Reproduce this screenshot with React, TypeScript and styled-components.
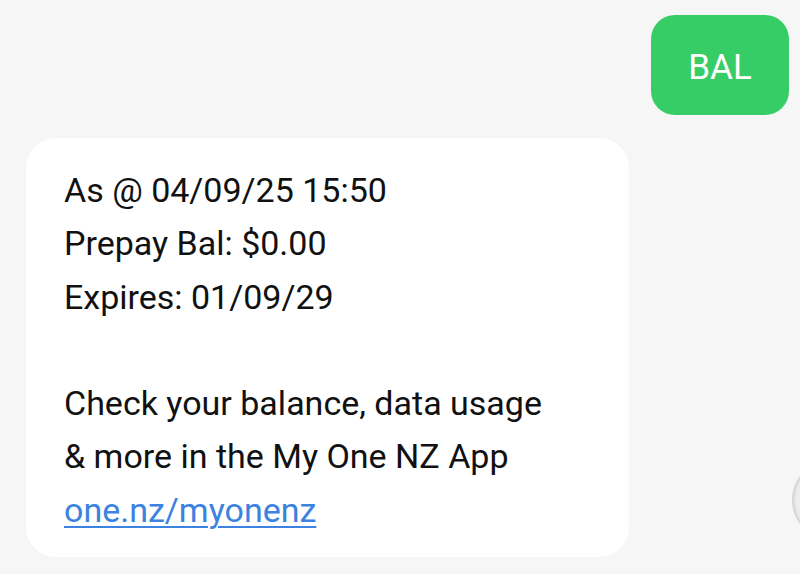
import styled, { createGlobalStyle } from "styled-components";

const GlobalStyle = createGlobalStyle`
    html, body {
        margin: 0;
        padding: 0;
        background: #f6f6f6;
        font-family: Roboto, "Noto Sans", "Liberation Sans", sans-serif;
    }
`

const Thread = styled.div`
    position: relative;
    width: 800px;
    height: 574px;
    overflow: hidden;
    display: flex;
    flex-direction: column;
    padding: 15px 11px 0 26px;
    box-sizing: border-box;
    gap: 23px;
`

const SentBubble = styled.div`
    align-self: flex-end;
    width: 138px;
    height: 100px;
    box-sizing: border-box;
    padding-top: 4px;
    border-radius: 24px;
    background: #36cd66;
    color: #fff;
    font-size: 35px;
    display: flex;
    align-items: center;
    justify-content: center;
`

const ReceivedBubble = styled.div`
    align-self: flex-start;
    width: 603px;
    height: 419px;
    box-sizing: border-box;
    padding: 26px 38px 0;
    border-radius: 30px;
    background: #fff;
    color: #111;
    font-size: 34px;
    line-height: 53.3px;
`

const Line = styled.div`
    height: 53.3px;
    white-space: nowrap;
`

const Link = styled.a`
    color: #3c82e0;
    text-decoration: underline;
    text-underline-offset: 4px;
    text-decoration-thickness: 2px;
`

const SideHandle = styled.div`
    position: absolute;
    left: 792px;
    top: 460px;
    width: 80px;
    height: 80px;
    border-radius: 50%;
    background: #ededed;
    box-shadow: inset 2px 0 3px rgba(0, 0, 0, 0.12);
`

const lines = [
    "As @ 04/09/25 15:50",
    "Prepay Bal: $0.00",
    "Expires: 01/09/29",
    "",
    "Check your balance, data usage",
    "& more in the My One NZ App",
]

export default function App() {
    return (<>
        <GlobalStyle/>
        <Thread>
            <SentBubble>BAL</SentBubble>
            <ReceivedBubble>
                {lines.map((l, i) => (<Line key={i}>{l}</Line>))}
                <Line><Link href="#">one.nz/myonenz</Link></Line>
            </ReceivedBubble>
            <SideHandle/>
        </Thread>
    </>)
}
